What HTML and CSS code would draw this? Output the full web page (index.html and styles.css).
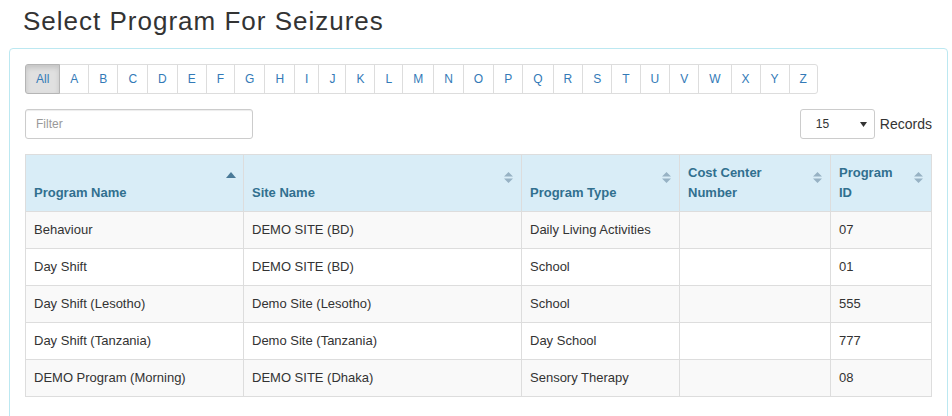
FILE: index.html
```html
<!DOCTYPE html>
<html>
<head>
<meta charset="utf-8">
<link rel="stylesheet" href="styles.css">
</head>
<body>
<div class="page">
  <h3 class="title">Select Program For Seizures</h3>
  <div class="panel">
    <ul class="alpha">
      <li class="active">All</li><li>A</li><li>B</li><li>C</li><li>D</li><li>E</li><li>F</li><li>G</li><li>H</li><li>I</li><li>J</li><li>K</li><li>L</li><li>M</li><li>N</li><li>O</li><li>P</li><li>Q</li><li>R</li><li>S</li><li>T</li><li>U</li><li>V</li><li>W</li><li>X</li><li>Y</li><li>Z</li>
    </ul>
    <div class="toolbar">
      <input class="filter" type="text" placeholder="Filter">
      <div class="records">
        <div class="select"><span>15</span><svg class="caret" width="7" height="5" viewBox="0 0 7 5"><path d="M0 0h7L3.5 5z" fill="#333"/></svg></div>
        <span class="records-label">Records</span>
      </div>
    </div>
    <table class="grid">
      <thead>
        <tr>
          <th class="c1">Program Name<span class="sort asc"><svg width="10" height="6" viewBox="0 0 10 6"><path d="M5 0L10 6H0z" fill="#4a7a98"/></svg></span></th>
          <th class="c2">Site Name<span class="sort both"><svg width="9" height="11" viewBox="0 0 9 11"><path d="M4.5 0L9 4.5H0zM4.5 11L0 6.5h9z" fill="#97b2c4"/></svg></span></th>
          <th class="c3">Program Type<span class="sort both"><svg width="9" height="11" viewBox="0 0 9 11"><path d="M4.5 0L9 4.5H0zM4.5 11L0 6.5h9z" fill="#97b2c4"/></svg></span></th>
          <th class="c4">Cost Center<br>Number<span class="sort both"><svg width="9" height="11" viewBox="0 0 9 11"><path d="M4.5 0L9 4.5H0zM4.5 11L0 6.5h9z" fill="#97b2c4"/></svg></span></th>
          <th class="c5">Program<br>ID<span class="sort both"><svg width="9" height="11" viewBox="0 0 9 11"><path d="M4.5 0L9 4.5H0zM4.5 11L0 6.5h9z" fill="#97b2c4"/></svg></span></th>
        </tr>
      </thead>
      <tbody>
        <tr><td>Behaviour</td><td>DEMO SITE (BD)</td><td>Daily Living Activities</td><td></td><td>07</td></tr>
        <tr><td>Day Shift</td><td>DEMO SITE (BD)</td><td>School</td><td></td><td>01</td></tr>
        <tr><td>Day Shift (Lesotho)</td><td>Demo Site (Lesotho)</td><td>School</td><td></td><td>555</td></tr>
        <tr><td>Day Shift (Tanzania)</td><td>Demo Site (Tanzania)</td><td>Day School</td><td></td><td>777</td></tr>
        <tr><td>DEMO Program (Morning)</td><td>DEMO SITE (Dhaka)</td><td>Sensory Therapy</td><td></td><td>08</td></tr>
      </tbody>
    </table>
  </div>
</div>
</body>
</html>
```

FILE: styles.css
```css
* { box-sizing: border-box; }
html, body { margin: 0; padding: 0; background: #fff; }
body {
  font-family: "Liberation Sans", Arial, sans-serif;
  font-size: 13px;
  color: #333;
  line-height: 20px;
}
.page { padding: 0 4px 0 9px; }
.title {
  margin: 6px 0 12px 14px;
  font-size: 26px;
  line-height: 30px;
  font-weight: normal;
  letter-spacing: 1px;
  color: #333;
}
.panel {
  width: 939px;
  border: 1px solid #bce8f1;
  border-radius: 4px;
  padding: 15px;
}
.alpha {
  display: flex;
  list-style: none;
  margin: 0;
  padding: 0;
}
.alpha li {
  font-size: 12px;
  line-height: 18px;
  padding: 5px 10px;
  border: 1px solid #ddd;
  margin-left: -1px;
  color: #337ab7;
  background: #fff;
}
.alpha li:first-child {
  margin-left: 0;
  border-radius: 3px 0 0 3px;
}
.alpha li:last-child { border-radius: 0 3px 3px 0; }
.alpha li.active {
  background: #e0e0e0;
  border-color: #b5b5b5;
  box-shadow: inset 0 3px 5px rgba(0,0,0,.125);
  position: relative;
  z-index: 1;
}
.toolbar {
  display: flex;
  justify-content: space-between;
  align-items: center;
  margin-top: 15px;
  margin-bottom: 15px;
}
.filter {
  width: 228px;
  height: 30px;
  border: 1px solid #ccc;
  border-radius: 3px;
  padding: 5px 10px;
  font-family: "Liberation Sans", Arial, sans-serif;
  font-size: 12px;
  box-shadow: inset 0 1px 1px rgba(0,0,0,.075);
}
.filter::placeholder { color: #999; }
.records { display: flex; align-items: center; gap: 5px; }
.select {
  width: 75px;
  height: 30px;
  border: 1px solid #ccc;
  border-radius: 3px;
  display: flex;
  align-items: center;
  justify-content: space-between;
  padding: 0 7px 0 15px;
  font-size: 12px;
  color: #333;
}
.caret { display: block; }
.records-label { font-size: 14px; }
.grid {
  width: 100%;
  border-collapse: collapse;
  border: 1px solid #ddd;
  margin-bottom: 20px;
}
.grid th, .grid td {
  border: 1px solid #ddd;
  padding: 8px;
  text-align: left;
}
.grid th {
  background: #d9edf7;
  color: #31708f;
  font-weight: bold;
  vertical-align: bottom;
  position: relative;
  padding-right: 24px;
}
.grid td { vertical-align: top; }
.grid tbody tr:nth-child(odd) td { background: #f9f9f9; }
.c1 { width: 218px; }
.c2 { width: 278px; }
.c3 { width: 158px; }
.c4 { width: 151px; }
.sort {
  position: absolute;
  right: 8px;
  top: 17px;
  line-height: 0;
}
.sort.asc { top: 17px; right: 7px; }
.sort svg { display: block; }
```
